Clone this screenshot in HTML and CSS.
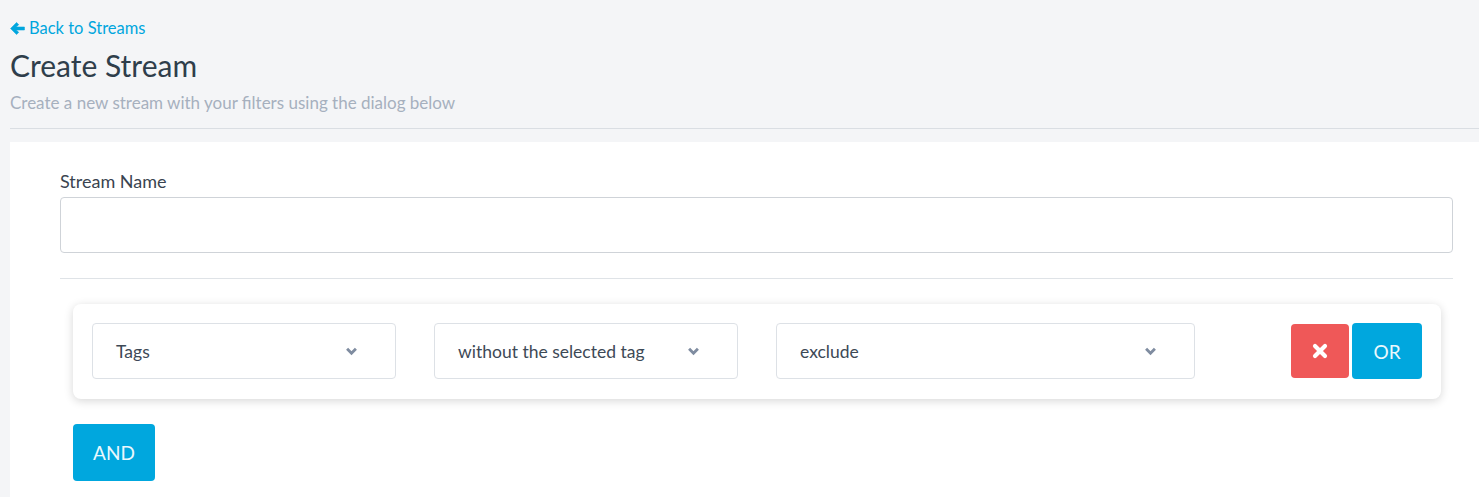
FILE: index.html
```html
<!DOCTYPE html>
<html>
<head>
<meta charset="utf-8">
<link rel="stylesheet" href="styles.css">
</head>
<body>
<div class="page">
  <header class="header">
    <a class="back" href="#">
      <svg class="back-icon" viewBox="0 0 16 16" width="15" height="15"><path d="M0.6 8 L7 1.6 L9.3 3.9 L6.7 6.4 H15.4 V9.6 H6.7 L9.3 12.1 L7 14.4 Z" fill="#00a6de" stroke="#00a6de" stroke-width="0.6" stroke-linejoin="round"/></svg>
      <span>Back to Streams</span>
    </a>
    <h1 class="title">Create Stream</h1>
    <p class="subtitle">Create a new stream with your filters using the dialog below</p>
  </header>
  <div class="panel">
    <label class="label">Stream Name</label>
    <div class="input"></div>
    <div class="rule"></div>
    <div class="filter-card">
      <div class="select w1"><span>Tags</span><svg class="chev" viewBox="0 0 10 8" width="11" height="9"><path d="M1 1.5 L5 5.5 L9 1.5" fill="none" stroke="#7f8ca0" stroke-width="2.6"/></svg></div>
      <div class="select w1"><span>without the selected tag</span><svg class="chev" viewBox="0 0 10 8" width="11" height="9"><path d="M1 1.5 L5 5.5 L9 1.5" fill="none" stroke="#7f8ca0" stroke-width="2.6"/></svg></div>
      <div class="select w2"><span>exclude</span><svg class="chev" viewBox="0 0 10 8" width="11" height="9"><path d="M1 1.5 L5 5.5 L9 1.5" fill="none" stroke="#7f8ca0" stroke-width="2.6"/></svg></div>
      <div class="actions">
        <button class="btn-remove"><svg viewBox="0 0 16 16" width="16" height="16"><path d="M3 3 L13 13 M13 3 L3 13" stroke="#fff" stroke-width="4.2" stroke-linecap="round"/></svg></button>
        <button class="btn-or">OR</button>
      </div>
    </div>
    <button class="btn-and">AND</button>
  </div>
</div>
</body>
</html>
```
FILE: styles.css
```css
* { box-sizing: border-box; }
html, body { margin: 0; padding: 0; }
body {
  background: #f4f5f7;
  font-family: "Lato", "Open Sans", sans-serif;
  color: #3a4654;
}
.page { padding-left: 10px; }
.header { padding-top: 18px; }
.back {
  display: flex;
  align-items: center;
  gap: 4px;
  color: #00a6de;
  text-decoration: none;
  font-size: 16.5px;
  line-height: 20px;
}
.back-icon { display: block; }
.title {
  margin: 9px 0 0 0;
  font-weight: 400;
  font-size: 30px;
  line-height: 36px;
  color: #2f3e4b;
}
.subtitle {
  margin: 10px 0 0 0;
  font-size: 17px;
  line-height: 20px;
  color: #a6b0be;
  padding-bottom: 15px;
  border-bottom: 1px solid #dadee3;
}
.panel {
  margin-top: 13px;
  background: #fff;
  padding: 28px 26px 17px 50px;
}
.label {
  display: block;
  font-size: 18px;
  line-height: 22px;
  color: #3a4450;
}
.input {
  margin-top: 5px;
  height: 56px;
  border: 1px solid #cfd3d8;
  border-radius: 4px;
}
.rule {
  margin-top: 25px;
  border-top: 1px solid #dfe3e7;
}
.filter-card {
  margin: 25px 12px 0 13px;
  background: #fff;
  border-radius: 8px;
  box-shadow: 0 2px 10px rgba(0,0,0,0.16);
  padding: 19px 19px 20px 19px;
  display: flex;
  align-items: center;
  gap: 38px;
}
.select {
  height: 56px;
  border: 1px solid #dde1e6;
  border-radius: 4px;
  display: flex;
  align-items: center;
  justify-content: space-between;
  padding: 0 38px 0 23px;
  font-size: 17.5px;
  color: #3d4956;
}
.w1 { width: 304px; }
.w2 { width: 419px; }
.chev { display: block; }
.actions {
  margin-left: auto;
  display: flex;
  align-items: center;
  gap: 3px;
}
.btn-remove {
  width: 58px;
  height: 54px;
  border: none;
  border-radius: 4px;
  background: #ef5858;
  display: flex;
  align-items: center;
  justify-content: center;
  padding: 0;
}
.btn-remove svg { display: block; }
.btn-or {
  width: 70px;
  height: 56px;
  border: none;
  border-radius: 4px;
  background: #00a7de;
  color: #eaf8fd;
  font-family: "Lato", "Open Sans", sans-serif;
  font-size: 19px;
  padding: 0;
}
.btn-and {
  margin: 25px 0 0 13px;
  width: 82px;
  height: 57px;
  border: none;
  border-radius: 4px;
  background: #00a7de;
  color: #eaf8fd;
  font-family: "Lato", "Open Sans", sans-serif;
  font-size: 19px;
  padding: 0;
}
```
